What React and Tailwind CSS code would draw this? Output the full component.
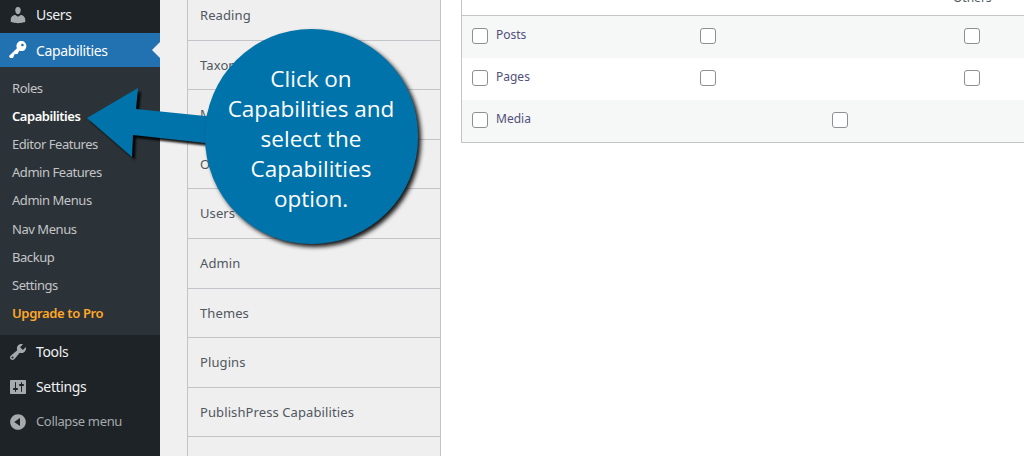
import React from 'react';

const icons = {
  users: 'M10 9.25c-2.27 0-2.73-3.44-2.73-3.44C7 4.02 7.82 2 9.97 2c2.16 0 2.98 2.02 2.71 3.81 0 0-.41 3.44-2.68 3.44zm0 2.57L12.72 10c2.39 0 4.52 2.33 4.52 4.53v2.49s-3.65 1.13-7.24 1.13c-3.65 0-7.24-1.13-7.24-1.13v-2.49c0-2.25 1.94-4.48 4.47-4.48z',
  key: 'M16.95 2.58c1.96 1.95 1.96 5.12 0 7.07-1.51 1.51-3.75 1.84-5.59 1.01l-1.87 3.31-2.99.31L5 18H2l-1-2 7.95-7.69c-.92-1.87-.62-4.18.93-5.73 1.95-1.96 5.12-1.96 7.07 0zm-2.51 3.79c.74 0 1.33-.6 1.33-1.34 0-.73-.59-1.33-1.33-1.33-.73 0-1.33.6-1.33 1.33 0 .74.6 1.34 1.33 1.34z',
  tools: 'M16.68 9.77c-1.34 1.34-3.3 1.67-4.95.99l-5.41 6.52c-.99.99-2.59.99-3.58 0s-.99-2.59 0-3.57l6.52-5.42c-.68-1.65-.35-3.61.99-4.95 1.28-1.28 3.12-1.62 4.72-1.06l-2.89 2.89 2.82 2.82 2.86-2.87c.53 1.58.18 3.39-1.08 4.65zM3.81 16.21c.4.39 1.04.39 1.43 0 .4-.4.4-1.04 0-1.43-.39-.4-1.03-.4-1.43 0-.39.39-.39 1.03 0 1.43z',
  settings: 'M18 16V4c0-.55-.45-1-1-1H3c-.55 0-1 .45-1 1v12c0 .55.45 1 1 1h14c.55 0 1-.45 1-1zM8 11h1c.55 0 1 .45 1 1s-.45 1-1 1H8v1.5c0 .28-.22.5-.5.5s-.5-.22-.5-.5V13H6c-.55 0-1-.45-1-1s.45-1 1-1h1V5.5c0-.28.22-.5.5-.5s.5.22.5.5V11zm5-2h-1c-.55 0-1-.45-1-1s.45-1 1-1h1V5.5c0-.28.22-.5.5-.5s.5.22.5.5V7h1c.55 0 1 .45 1 1s-.45 1-1 1h-1v5.5c0 .28-.22.5-.5.5s-.5-.22-.5-.5V9z',
  collapse: 'M10 2.16c4.33 0 7.84 3.51 7.84 7.84s-3.51 7.84-7.84 7.84S2.16 14.33 2.16 10 5.71 2.16 10 2.16zm2 11.72V6.12L6.18 9.97z',
};

const Icon = ({ name, className }) => (
  <svg viewBox="0 0 20 20" className={className} fill="currentColor">
    <path d={icons[name]} fillRule="evenodd" />
  </svg>
);

const subMenu = ['Roles', 'Capabilities', 'Editor Features', 'Admin Features', 'Admin Menus', 'Nav Menus', 'Backup', 'Settings', 'Upgrade to Pro'];

const tabs = [
  { label: 'Reading', h: 'h-[41px]' },
  { label: 'Taxonomies', h: 'h-[49px]', nudge: true },
  { label: 'Metaboxes', h: 'h-[50px]' },
  { label: 'Other', h: 'h-[49px]', nudge: true },
  { label: 'Users', h: 'h-[50px]' },
  { label: 'Admin', h: 'h-[50px]' },
  { label: 'Themes', h: 'h-[49px]', nudge: true },
  { label: 'Plugins', h: 'h-[50px]' },
  { label: 'PublishPress Capabilities', h: 'h-[49px]', nudge: true },
  { label: '', h: 'h-[19px]' },
];

const Check = () => <span className="block w-[16px] h-[16px] rounded-[3px] border border-[#8c8f94] bg-white -translate-y-[1px]" />;

const Sidebar = () => (
  <aside className="w-[160px] shrink-0 bg-[#1d2327] text-[14px] font-['Noto_Sans',sans-serif] tracking-[-0.35px]">
    <div className="h-[33px] pb-[4px] flex items-center text-[#f0f0f1]">
      <Icon name="users" className="w-[20px] h-[20px] ml-[8px] mr-[8px] text-[#a7aaad]" />
      Users
    </div>
    <div className="relative h-[34px] flex items-center bg-[#2271b1] text-white">
      <Icon name="key" className="w-[20px] h-[20px] ml-[8px] mr-[8px]" />
      Capabilities
      <span className="absolute right-0 top-[9px] border-y-[8px] border-r-[8px] border-y-transparent border-r-[#f0f0f1]" />
    </div>
    <div className="h-[268px] bg-[#2c3338] pt-[7.8px] text-[13px] tracking-[-0.45px]">
      {subMenu.map((item) => (
        <div
          key={item}
          className={`h-[28.1px] flex items-center pl-[12px] ${
            item === 'Capabilities' ? 'text-white font-semibold' : item === 'Upgrade to Pro' ? 'text-[#ffa726] font-semibold tracking-[-0.35px]' : 'text-[#c3c4c7]'
          }`}
        >
          {item}
        </div>
      ))}
    </div>
    <div className="h-[34px] pb-[1px] flex items-center text-[#f0f0f1]">
      <Icon name="tools" className="w-[20px] h-[20px] ml-[8px] mr-[8px] text-[#a7aaad]" />
      Tools
    </div>
    <div className="h-[35px] flex items-center text-[#f0f0f1]">
      <Icon name="settings" className="w-[20px] h-[20px] ml-[8px] mr-[8px] text-[#a7aaad]" />
      Settings
    </div>
    <div className="h-[35px] flex items-center text-[13px] text-[#a7aaad]">
      <Icon name="collapse" className="w-[20px] h-[20px] ml-[8px] mr-[8px]" />
      Collapse menu
    </div>
  </aside>
);

const TabList = () => (
  <div className="w-[281px] shrink-0 bg-[#f0f0f1] pl-[27px]">
    <div className="h-full border-x border-[#c3c4c7] bg-[#efefef]">
      {tabs.map((t, i) => (
        <div
          key={i}
          className={`${t.h} flex pl-[12px] text-[13px] text-[#50575e] font-['Noto_Sans',sans-serif] tracking-[0.1px] ${
            i < tabs.length - 1 ? 'border-b border-[#c3c4c7]' : ''
          } ${i === 0 ? 'items-start' : 'items-center'}`}
        >
          <span className={i === 0 ? 'mt-[6px]' : t.nudge ? 'translate-y-[0.5px]' : ''}>{t.label}</span>
        </div>
      ))}
    </div>
  </div>
);

const rows = [
  { label: 'Posts', bg: 'bg-[#f6f7f7]', cells: [1, 0, 1] },
  { label: 'Pages', bg: 'bg-white', cells: [1, 0, 1] },
  { label: 'Media', bg: 'bg-[#f6f7f7]', cells: [0, 1, 0] },
];

const CapTable = () => (
  <div className="flex-1 bg-white pl-[20px] overflow-hidden font-['Noto_Sans',sans-serif]">
    <div className="border-l border-b border-[#c3c4c7] h-[16px] relative">
      <span className="absolute left-[491px] -top-[10px] text-[12px] leading-[16px] text-[#50575e]">Others</span>
    </div>
    <div className="border-l border-b border-[#c3c4c7]">
      {rows.map((r) => (
        <div key={r.label} className={`h-[42px] flex items-center ${r.bg}`}>
          <div className="w-[238px] pl-[10px] flex items-center gap-[8px]">
            <Check />
            <span className="text-[12px] text-[#50507a] -translate-y-[2px]">{r.label}</span>
          </div>
          <div className="w-[132px]">{r.cells[0] ? <Check /> : null}</div>
          <div className="w-[132px]">{r.cells[1] ? <Check /> : null}</div>
          <div className="w-[40px]">{r.cells[2] ? <Check /> : null}</div>
        </div>
      ))}
    </div>
  </div>
);

// annotation laid on top of the screenshot
const Callout = () => (
  <>
    <svg
      className="absolute left-[80px] top-[80px] w-[140px] h-[85px] drop-shadow-[3px_3px_1px_rgba(0,0,0,0.9)]"
      viewBox="0 0 140 85"
    >
      <path d="M7 38 L58 8 L56 29 L135 37 L135 64 L53 55 L52 77 Z" fill="#0073aa" />
    </svg>
    <div className="absolute left-[205px] top-[29px] w-[213px] h-[215px] rounded-full bg-[#0073aa] shadow-[3px_3px_4px_rgba(0,0,0,0.9)] flex items-center justify-center text-center text-white text-[22.5px] leading-[30px] font-['Open_Sans',sans-serif]">
      <div className="translate-y-[2px] -translate-x-[0.5px]">
        Click on<br />Capabilities and<br />select the<br />Capabilities<br />option.
      </div>
    </div>
  </>
);

export default function App() {
  return (
    <div className="relative w-[1024px] h-[456px] overflow-hidden flex bg-white">
      <Sidebar />
      <TabList />
      <CapTable />
      <Callout />
    </div>
  );
}
